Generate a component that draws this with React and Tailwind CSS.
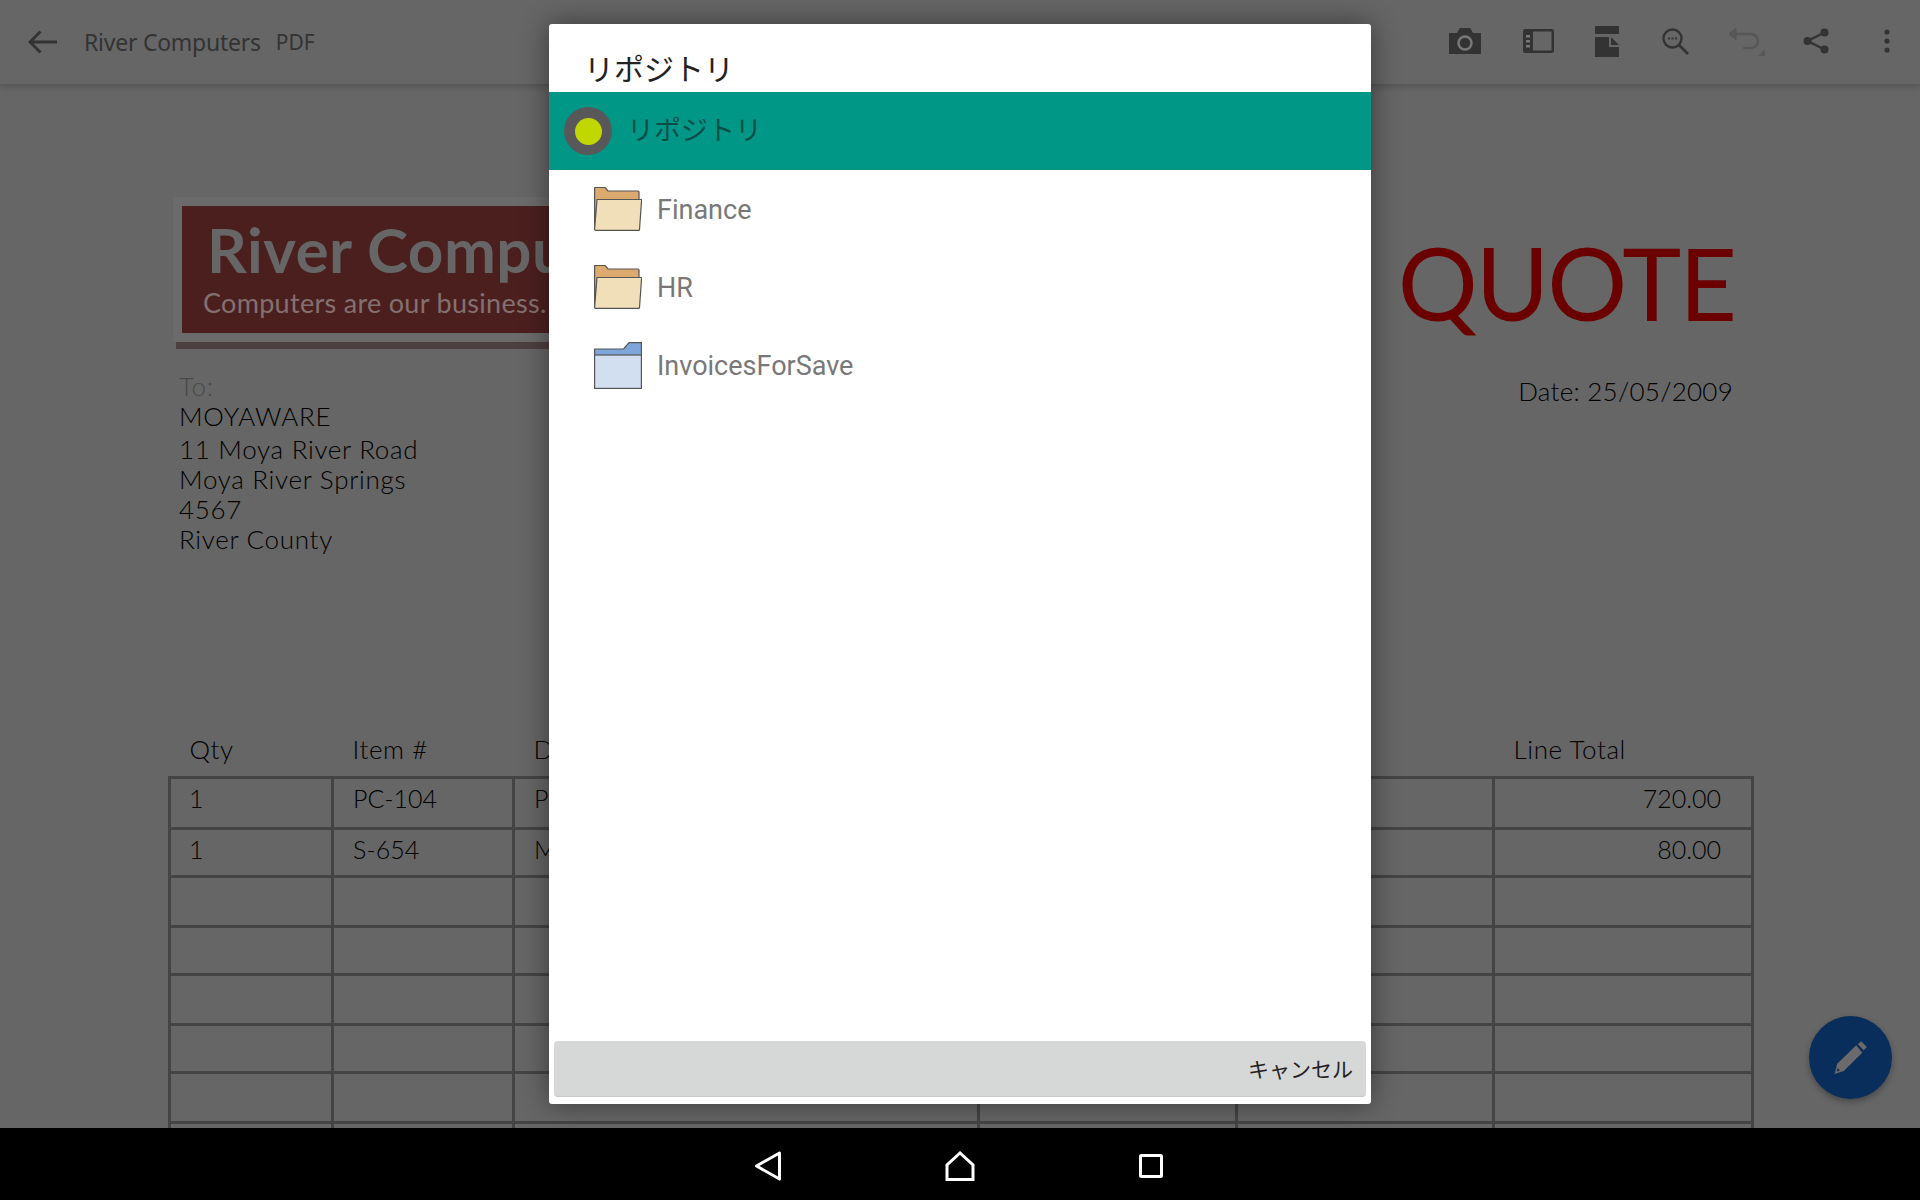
const docFont = "font-['Lato','Liberation_Sans',sans-serif]";

const columns = [163, 181, 465, 258, 257, 259];

const addressLines = [
  { text: "To:", className: "h-[30px] text-[#4a4a4a]" },
  { text: "MOYAWARE", className: "h-[33px]" },
  { text: "11 Moya River Road", className: "h-[30px]" },
  { text: "Moya River Springs", className: "h-[30px]" },
  { text: "4567", className: "h-[30px]" },
  { text: "River County", className: "h-[30px]" },
];

const rows = [
  { qty: "1", item: "PC-104", desc: "P", total: "720.00", height: "h-[51px]" },
  { qty: "1", item: "S-654", desc: "M", total: "80.00", height: "h-[48px]" },
  { height: "h-[50px]" },
  { height: "h-[48px]" },
  { height: "h-[50px]" },
  { height: "h-[48px]" },
  { height: "h-[50px]" },
  { height: "h-[48px]" },
];

const folders = [
  { name: "Finance", kind: "orange" },
  { name: "HR", kind: "orange" },
  { name: "InvoicesForSave", kind: "blue" },
];

const CameraIcon = () => (
  <svg width="32" height="26" viewBox="0 0 32 26">
    <path d="M0 5h8l2.5-4.5q.3-.5 1-.5h9q.7 0 1 .5L24 5h8v21H0z" fill="#333" />
    <circle cx="16" cy="15" r="6.5" fill="none" stroke="#777" strokeWidth="2.5" />
  </svg>
);

const PanelIcon = () => (
  <svg width="31" height="24" viewBox="0 0 31 24">
    <rect x="1.25" y="1.25" width="28.5" height="21.5" rx="1" fill="none" stroke="#333" strokeWidth="2.5" />
    <rect x="1" y="1" width="9" height="22" fill="#333" />
    <path d="M3 6h4v2.5H3zM3 11h4v2.5H3zM3 16h4v2.5H3z" fill="#777" />
  </svg>
);

const PageIcon = () => (
  <svg width="24" height="31" viewBox="0 0 24 31">
    <rect width="24" height="8" rx="1" fill="#333" />
    <path d="M0 11h14v10h10v10H0zM16 11l8 8h-8z" fill="#333" />
  </svg>
);

const SearchIcon = () => (
  <svg width="27" height="27" viewBox="0 0 27 27" fill="none" stroke="#333">
    <circle cx="10.5" cy="10.5" r="9" strokeWidth="2.4" />
    <path d="M17 17l9 9" strokeWidth="2.6" />
    <path d="M6 10.5h2M9.5 10.5h2M13 10.5h2" strokeWidth="2" />
  </svg>
);

const UndoIcon = () => (
  <svg width="38" height="29" viewBox="0 0 38 29" fill="none" stroke="#575757">
    <path d="M2 7h22a6.5 6.5 0 0 1 0 14h-8" strokeWidth="2.6" />
    <path d="M9 1L2 7l7 6z" fill="#575757" strokeWidth="1" />
    <path d="M38 22v7h-7z" fill="#575757" stroke="none" />
  </svg>
);

const ShareIcon = () => (
  <svg width="26" height="26" viewBox="0 0 26 26" fill="#333" stroke="#333">
    <path d="M21.5 4.5L4.5 13l17 8.5" fill="none" strokeWidth="2.4" />
    <circle cx="21.5" cy="4.5" r="4" stroke="none" />
    <circle cx="4.5" cy="13" r="4" stroke="none" />
    <circle cx="21.5" cy="21.5" r="4" stroke="none" />
  </svg>
);

const MoreIcon = () => (
  <svg width="6" height="24" viewBox="0 0 6 24" fill="#333">
    <circle cx="3" cy="3" r="2.6" />
    <circle cx="3" cy="12" r="2.6" />
    <circle cx="3" cy="21" r="2.6" />
  </svg>
);

const FolderIcon = ({ kind }) =>
  kind === "orange" ? (
    <svg width="48" height="44" viewBox="0 0 48 44" stroke="#555" strokeWidth="1.2">
      <path d="M.6 43V1q0-.5.5-.5h10L14 4h30q1 0 1 1v10H3z" fill="#dcaa6e" />
      <path d="M3 12.5h44q.7 0 .6.7L45.5 42.4q0 .9-1 .9H1.6q-1 0-1-1z" fill="#f0dfb8" />
    </svg>
  ) : (
    <svg width="48" height="47" viewBox="0 0 48 47" stroke="#555" strokeWidth="1.2">
      <path d="M.6 7h29L35 .6h12.4V14H.6z" fill="#7fa6da" />
      <rect x=".6" y="13" width="46.8" height="33.4" fill="#d2dff0" />
    </svg>
  );

const App = () => {
  return (
    <div className="relative flex h-[1200px] w-[1920px] flex-col overflow-hidden bg-[#666]">
      <header className="z-10 flex h-[84px] shrink-0 items-center bg-[#666] pl-[28px] shadow-[0_3px_6px_rgba(0,0,0,0.16)]">
        <svg width="29" height="24" viewBox="0 0 29 24" fill="none" stroke="#333" strokeWidth="3">
          <path d="M29 12H3M12.5 1.5L2 12l10.5 10.5" />
        </svg>
        <span className="ml-[27px] font-['Noto_Sans',sans-serif] text-[23px] tracking-[-0.25px] text-[#333]">River Computers</span>
        <span className="ml-[15px] pt-[2px] font-['Noto_Sans',sans-serif] text-[21px] text-[#333]">PDF</span>
        <div className="ml-auto flex items-center pb-[2px]">
          <div><CameraIcon /></div>
          <div className="ml-[42px]"><PanelIcon /></div>
          <div className="ml-[41px]"><PageIcon /></div>
          <div className="ml-[43px]"><SearchIcon /></div>
          <div className="ml-[38px]"><UndoIcon /></div>
          <div className="ml-[38px]"><ShareIcon /></div>
          <div className="ml-[55px] mr-[30px]"><MoreIcon /></div>
        </div>
      </header>

      <main className={`relative min-h-0 flex-1 overflow-hidden pl-[168px] ${docFont} text-[26px] font-light text-black`}>
        <div className="flex w-[1586px] justify-between pt-[113px]">
          <div className="pl-[5px]">
            <div className="h-[145px] w-[420px] bg-[#6b6b6b] pl-[9px] pt-[9px]">
              <div className="h-[127px] w-[411px] overflow-hidden bg-[#4c1f1f] pl-[25px] whitespace-nowrap">
                <div className="pt-[8px] text-[62px] font-bold leading-[70px] tracking-[0.5px] text-[#666]">River Computers</div>
                <div className="-ml-[4px] pt-[3px] text-[27px] font-normal leading-[32px] tracking-[0.3px] text-[#847070]">Computers are our business.</div>
              </div>
            </div>
            <div className="ml-[3px] h-[7px] w-[417px] bg-[#4d3f3f]" />
            <div className="pt-[22px] pl-[6px] tracking-[0.7px]">
              {addressLines.map((line) => (
                <div key={line.text} className={`${line.className} leading-[30px]`}>{line.text}</div>
              ))}
            </div>
          </div>
          <div className="pr-[21px] pt-[25px] text-right">
            <div className="-mr-[2px] text-[100px] font-normal leading-[120px] tracking-[-2px] text-[#6b0000]">QUOTE</div>
            <div className="mt-[34px] leading-[30px] tracking-[0.25px]">Date: 25/05/2009</div>
          </div>
        </div>

        <table className="mt-[175px] w-[1583px] table-fixed border-collapse">
          <colgroup>
            {columns.map((width, index) => (
              <col key={index} style={{ width }} />
            ))}
          </colgroup>
          <thead>
            <tr className="h-[48px] text-left tracking-[0.6px]">
              <th className="pb-[5px] pl-5 font-light">Qty</th>
              <th className="pb-[5px] pl-5 font-light">Item #</th>
              <th className="pb-[5px] pl-5 font-light">D</th>
              <th />
              <th />
              <th className="pb-[5px] pl-5 font-light">Line Total</th>
            </tr>
          </thead>
          <tbody className="text-[25px]">
            {rows.map((row, index) => (
              <tr key={index} className={row.height}>
                <td className="border-[3px] border-[#444] pl-[18px] pt-[6px] align-top leading-[26px]">{row.qty}</td>
                <td className="border-[3px] border-[#444] pl-[19px] pt-[6px] align-top leading-[26px]">{row.item}</td>
                <td className="border-[3px] border-[#444] pl-[19px] pt-[6px] align-top leading-[26px]">{row.desc}</td>
                <td className="border-[3px] border-[#444]" />
                <td className="border-[3px] border-[#444]" />
                <td className="border-[3px] border-[#444] pr-[30px] pt-[6px] text-right align-top leading-[26px]">{row.total}</td>
              </tr>
            ))}
          </tbody>
        </table>
      </main>

      <nav className="z-20 flex h-[72px] shrink-0 items-center justify-center bg-black pr-[3px] pt-[4px]">
        <svg width="28" height="30" viewBox="0 0 28 30" fill="none" stroke="#fff" strokeWidth="3" strokeLinejoin="round" className="mr-[163px]">
          <path d="M25.5 2L2.5 15l23 13z" />
        </svg>
        <svg width="30" height="30" viewBox="0 0 30 30" fill="none" stroke="#fff" strokeWidth="3" className="mr-[164px]">
          <path d="M15 2L2 14v14.5h26V14z" />
        </svg>
        <svg width="24" height="24" viewBox="0 0 24 24" fill="none" stroke="#fff" strokeWidth="3">
          <rect x="1.5" y="1.5" width="21" height="21" rx="1" />
        </svg>
      </nav>

      <button className="absolute left-[1809px] top-[1016px] z-10 flex h-[83px] w-[83px] items-center justify-center rounded-full bg-[#0a2e5c] shadow-[0_3px_6px_rgba(0,0,0,0.3)]">
        <svg width="34" height="34" viewBox="0 -1 33 34" fill="#6b6b6b">
          <path d="M2.7 21.7L21.7 3.3l6 7.4L9.3 29 0 32z" />
          <path d="M23.3 2.3l3.4-3 5.6 5.7-3 3.3z" />
          <path d="M3 26l2.5 2.5-3.4 1z" fill="#0a2e5c" />
        </svg>
      </button>

      <div className="absolute left-[549px] top-[24px] z-30 flex h-[1080px] w-[822px] flex-col rounded-[3px] bg-white font-['Roboto','Noto_Sans_CJK_JP',sans-serif] shadow-[0_0_28px_rgba(0,0,0,0.45)]">
        <h2 className="flex h-[68px] items-end pb-[5px] pl-[35px] font-['Noto_Sans_CJK_JP',sans-serif] text-[30px] font-normal leading-[40px] text-[#222]">リポジトリ</h2>
        <div className="flex h-[78px] items-center bg-[#009787] pl-[15px]">
          <span className="flex h-[48px] w-[48px] items-center justify-center rounded-full bg-[#58585a]">
            <span className="h-[27px] w-[27px] rounded-full bg-[#c1d700]" />
          </span>
          <span className="ml-[15px] pb-[3px] font-['Noto_Sans_CJK_JP',sans-serif] text-[27px] text-[#0a4f47]">リポジトリ</span>
        </div>
        <ul className="flex-1">
          {folders.map((folder) => (
            <li key={folder.name} className="flex h-[78px] items-center pl-[45px] text-[27px] text-[#787878]">
              <FolderIcon kind={folder.kind} />
              <span className="ml-[15px] pt-[2px]">{folder.name}</span>
            </li>
          ))}
        </ul>
        <div className="px-[5px] pb-[7px]">
          <button className="flex h-[56px] w-full items-center justify-end rounded-[4px] border-b border-[#c8c8c8] bg-[#d6d7d7] pr-[13px] font-['Noto_Sans_CJK_JP',sans-serif] text-[21px] text-[#222]">
            キャンセル
          </button>
        </div>
      </div>
    </div>
  );
};

export default App;
